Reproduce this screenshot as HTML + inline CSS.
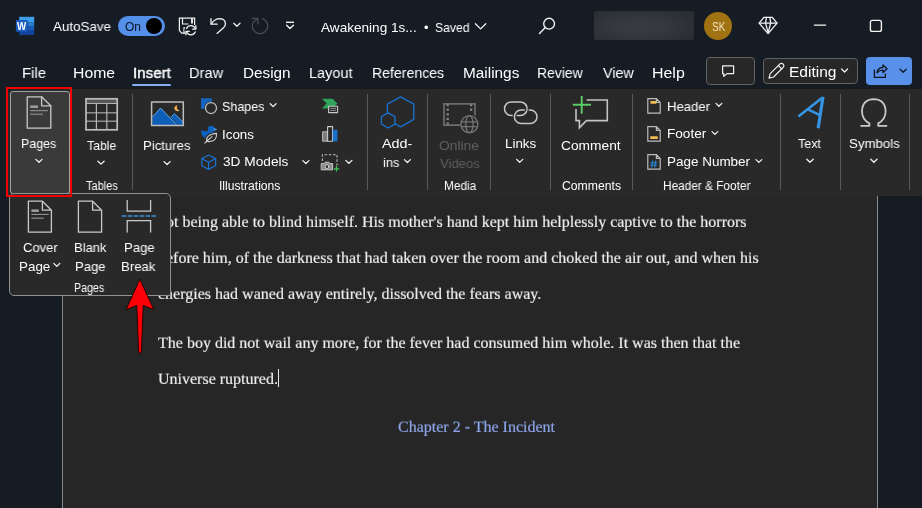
<!DOCTYPE html>
<html lang="en">
<head>
<meta charset="utf-8">
<title>Word - Insert Page Break</title>
<style>
html,body{margin:0;padding:0}
body{width:922px;height:508px;overflow:hidden;background:#161c24;position:relative;font-family:'Liberation Sans',sans-serif}
.abs{position:absolute}
.t{position:absolute;will-change:transform;white-space:pre;line-height:1;transform-origin:0 50%;font-family:'Liberation Sans',sans-serif}
.d{position:absolute;will-change:transform;transform-origin:0 13px;transform:scaleY(0.95);-webkit-text-stroke-width:0.2px;white-space:pre;line-height:1;font-family:'Liberation Serif',serif;font-size:16px;color:#ececec}
#ribbon{left:7px;top:89px;width:915px;height:107px;background:#292929;border-radius:6px 0 0 0}
#page{left:62px;top:196px;width:814px;height:312px;background:#262626;border-left:1px solid #8a8a8a;border-right:1px solid #8c8c8c}
.sep{position:absolute;top:94px;width:1px;height:96px;background:#5a5a5a}
#pagesbtn{left:10px;top:91px;width:58px;height:101px;background:#3a3a3a;border:1px solid #a2a2a2;border-radius:3px}
#redbox{left:6px;top:87px;width:62px;height:106px;border:2.5px solid #f00000}
#drop{left:9px;top:193px;width:162px;height:103px;background:#292929;border:1px solid #929292;border-radius:5px 5px 2px 5px;box-sizing:border-box}
#blur{left:594px;top:11px;width:100px;height:29px;background:radial-gradient(ellipse 62% 70% at 45% 55%,#393c41 0%,#34383d 45%,#2a2e33 100%);border-radius:2px}
#avatar{left:704px;top:12px;width:28px;height:28px;border-radius:50%;background:#a07212}
.btn{position:absolute;box-sizing:border-box;border:1px solid #626262;border-radius:4px;background:#272727}
#share{left:866px;top:57px;width:46px;height:27.8px;background:#5991ea;border-radius:4px}
#insul{left:132.4px;top:83.8px;width:38.4px;height:2.2px;background:#86aef0;border-radius:1px}
#toggle{left:117.7px;top:16.1px;width:47.5px;height:19.8px;border-radius:9.9px;background:#5490ea}
#knob{left:146.1px;top:17.9px;width:16px;height:16px;border-radius:50%;background:#000}
#caret{left:278px;top:369px;width:1px;height:18px;background:#e8e8e8}
svg{position:absolute;left:0;top:0;overflow:visible}
</style>
</head>
<body>
<div class="abs" id="ribbon"></div>
<div class="abs" id="page"></div>
<span class="d" style="left:158px;top:214px">not being able to blind himself. His mother's hand kept him helplessly captive to the horrors</span>
<span class="d" style="left:158px;top:250px">before him, of the darkness that had taken over the room and choked the air out, and when his</span>
<span class="d" style="left:158px;top:286px">energies had waned away entirely, dissolved the fears away.</span>
<span class="d" style="left:158px;top:335px">The boy did not wail any more, for the fever had consumed him whole. It was then that the</span>
<span class="d" style="left:158px;top:371px">Universe ruptured.</span>
<span class="d" style="left:398px;top:419px;color:#8ea6ea">Chapter 2 - The Incident</span>

<div class="abs" id="caret"></div>
<div class="abs" id="toggle"></div><div class="abs" id="knob"></div>
<div class="abs" id="blur"></div>
<div class="abs" id="avatar"></div>
<div class="btn" style="left:706px;top:57px;width:48.5px;height:27.5px"></div>
<div class="btn" style="left:763px;top:57.5px;width:95px;height:26.5px"></div>
<div class="abs" id="share"></div>
<div class="abs" id="insul"></div>
<div class="sep" style="left:132px"></div>
<div class="sep" style="left:367px"></div>
<div class="sep" style="left:427px"></div>
<div class="sep" style="left:490px"></div>
<div class="sep" style="left:550px"></div>
<div class="sep" style="left:632px"></div>
<div class="sep" style="left:780px"></div>
<div class="sep" style="left:840px"></div>
<div class="sep" style="left:909px"></div>
<div class="abs" id="pagesbtn"></div>
<div class="abs" id="drop"></div>
<div class="abs" id="redbox"></div>
<span class="t" style="left:53.30px;top:20.00px;font-size:13.5px;color:#ffffff;font-weight:400;transform:scaleX(0.9908);">AutoSave</span>
<span class="t" style="left:124.50px;top:21.00px;font-size:12px;color:#0b1220;font-weight:400;transform:scaleX(0.9782);">On</span>
<span class="t" style="left:321.20px;top:21.00px;font-size:13.5px;color:#ffffff;font-weight:400;transform:scaleX(1.0063);">Awakening 1s...</span>
<span class="t" style="left:423.90px;top:22.00px;font-size:12px;color:#ffffff;font-weight:400;transform:scaleX(1.0750);">•</span>
<span class="t" style="left:434.50px;top:21.00px;font-size:13.5px;color:#ffffff;font-weight:400;transform:scaleX(0.9028);">Saved</span>
<span class="t" style="left:711.70px;top:21.00px;font-size:12px;color:#f2e2bf;font-weight:400;transform:scaleX(0.8310);">SK</span>
<span class="t" style="left:21.53px;top:65.00px;font-size:15.3px;color:#ffffff;font-weight:400;transform:scaleX(0.9723);">File</span>
<span class="t" style="left:73.47px;top:65.00px;font-size:15.3px;color:#ffffff;font-weight:400;transform:scaleX(1.0306);">Home</span>
<span class="t" style="left:132.71px;top:65.00px;font-size:15.3px;color:#ffffff;font-weight:400;transform:scaleX(0.9867);-webkit-text-stroke:0.45px #fff">Insert</span>
<span class="t" style="left:189.05px;top:65.00px;font-size:15.3px;color:#ffffff;font-weight:400;transform:scaleX(0.9538);">Draw</span>
<span class="t" style="left:242.51px;top:65.00px;font-size:15.3px;color:#ffffff;font-weight:400;transform:scaleX(0.9911);">Design</span>
<span class="t" style="left:309.05px;top:65.00px;font-size:15.3px;color:#ffffff;font-weight:400;transform:scaleX(0.9457);">Layout</span>
<span class="t" style="left:372.08px;top:65.00px;font-size:15.3px;color:#ffffff;font-weight:400;transform:scaleX(0.9217);">References</span>
<span class="t" style="left:462.50px;top:65.00px;font-size:15.3px;color:#ffffff;font-weight:400;transform:scaleX(1.0043);">Mailings</span>
<span class="t" style="left:537.09px;top:65.00px;font-size:15.3px;color:#ffffff;font-weight:400;transform:scaleX(0.9120);">Review</span>
<span class="t" style="left:602.50px;top:65.00px;font-size:15.3px;color:#ffffff;font-weight:400;transform:scaleX(0.9370);">View</span>
<span class="t" style="left:651.96px;top:65.00px;font-size:15.3px;color:#ffffff;font-weight:400;transform:scaleX(1.0416);">Help</span>
<span class="t" style="left:789.00px;top:64.00px;font-size:15.5px;color:#ffffff;font-weight:400;transform:scaleX(0.9984);">Editing</span>
<span class="t" style="left:21.07px;top:137.00px;font-size:13.4px;color:#ffffff;font-weight:400;transform:scaleX(0.9283);">Pages</span>
<span class="t" style="left:86.80px;top:139.00px;font-size:13.4px;color:#ffffff;font-weight:400;transform:scaleX(0.9156);">Table</span>
<span class="t" style="left:85.60px;top:180.00px;font-size:12px;color:#ffffff;font-weight:400;transform:scaleX(0.9168);">Tables</span>
<span class="t" style="left:142.92px;top:139.00px;font-size:13.4px;color:#ffffff;font-weight:400;transform:scaleX(0.9816);">Pictures</span>
<span class="t" style="left:222.30px;top:100.00px;font-size:13.4px;color:#ffffff;font-weight:400;transform:scaleX(0.9339);">Shapes</span>
<span class="t" style="left:221.91px;top:128.00px;font-size:13.4px;color:#ffffff;font-weight:400;transform:scaleX(0.9869);">Icons</span>
<span class="t" style="left:222.90px;top:155.00px;font-size:13.4px;color:#ffffff;font-weight:400;transform:scaleX(1.0216);">3D Models</span>
<span class="t" style="left:219.39px;top:180.00px;font-size:12px;color:#ffffff;font-weight:400;transform:scaleX(1.0119);">Illustrations</span>
<span class="t" style="left:382.20px;top:137.00px;font-size:13.4px;color:#ffffff;font-weight:400;transform:scaleX(1.0745);">Add-</span>
<span class="t" style="left:382.50px;top:156.00px;font-size:13.4px;color:#ffffff;font-weight:400;transform:scaleX(0.9528);">ins</span>
<span class="t" style="left:439.40px;top:139.00px;font-size:13.4px;color:#5e5e5e;font-weight:400;transform:scaleX(1.0324);">Online</span>
<span class="t" style="left:439.70px;top:157.00px;font-size:13.4px;color:#5e5e5e;font-weight:400;transform:scaleX(0.9779);">Videos</span>
<span class="t" style="left:443.60px;top:180.00px;font-size:12px;color:#ffffff;font-weight:400;transform:scaleX(0.9846);">Media</span>
<span class="t" style="left:504.61px;top:137.00px;font-size:13.4px;color:#ffffff;font-weight:400;transform:scaleX(0.9946);">Links</span>
<span class="t" style="left:561.40px;top:139.00px;font-size:13.4px;color:#ffffff;font-weight:400;transform:scaleX(1.0271);">Comment</span>
<span class="t" style="left:562.00px;top:180.00px;font-size:12px;color:#ffffff;font-weight:400;transform:scaleX(1.0170);">Comments</span>
<span class="t" style="left:666.82px;top:100.00px;font-size:13.4px;color:#ffffff;font-weight:400;transform:scaleX(0.9802);">Header</span>
<span class="t" style="left:666.79px;top:127.00px;font-size:13.4px;color:#ffffff;font-weight:400;transform:scaleX(1.0146);">Footer</span>
<span class="t" style="left:666.79px;top:155.00px;font-size:13.4px;color:#ffffff;font-weight:400;transform:scaleX(1.0054);">Page Number</span>
<span class="t" style="left:663.40px;top:180.00px;font-size:12px;color:#ffffff;font-weight:400;transform:scaleX(0.9852);">Header &amp; Footer</span>
<span class="t" style="left:798.40px;top:137.00px;font-size:13.4px;color:#ffffff;font-weight:400;transform:scaleX(0.9341);">Text</span>
<span class="t" style="left:849.20px;top:137.00px;font-size:13.4px;color:#ffffff;font-weight:400;transform:scaleX(0.9874);">Symbols</span>
<span class="t" style="left:23.20px;top:241.00px;font-size:13.4px;color:#ffffff;font-weight:400;transform:scaleX(0.9735);">Cover</span>
<span class="t" style="left:18.61px;top:260.00px;font-size:13.4px;color:#ffffff;font-weight:400;transform:scaleX(0.9857);">Page</span>
<span class="t" style="left:73.93px;top:241.00px;font-size:13.4px;color:#ffffff;font-weight:400;transform:scaleX(0.9695);">Blank</span>
<span class="t" style="left:74.52px;top:260.00px;font-size:13.4px;color:#ffffff;font-weight:400;transform:scaleX(0.9757);">Page</span>
<span class="t" style="left:123.82px;top:241.00px;font-size:13.4px;color:#ffffff;font-weight:400;transform:scaleX(0.9790);">Page</span>
<span class="t" style="left:121.42px;top:260.00px;font-size:13.4px;color:#ffffff;font-weight:400;transform:scaleX(0.9829);">Break</span>
<span class="t" style="left:74.40px;top:282.00px;font-size:12px;color:#ffffff;font-weight:400;transform:scaleX(0.8876);">Pages</span>
<svg width="922" height="508" viewBox="0 0 922 508" fill="none" stroke-linecap="round" stroke-linejoin="round">
<!-- Word logo -->
<g stroke="none">
<rect x="19.2" y="16.8" width="15" height="5.8" fill="#3d9fec"/>
<rect x="19.2" y="22.4" width="15" height="4" fill="#2b7bd2"/>
<rect x="19.2" y="26.2" width="15" height="4.4" fill="#195bbf"/>
<rect x="19.2" y="30.4" width="15" height="4.5" fill="#1146a0"/>
<rect x="16.6" y="20.6" width="11.8" height="11.8" rx="1.2" fill="#0b2f66" opacity="0.45"/>
<rect x="15.9" y="20.1" width="11.7" height="11.7" rx="1.2" fill="#1a5bbf"/>
<text x="17" y="29.8" font-family="'Liberation Sans',sans-serif" font-size="10.6" font-weight="700" fill="#fff" textLength="9.2" lengthAdjust="spacingAndGlyphs">W</text>
</g>
<!-- Save (floppy + sync) -->
<g stroke="#f2f2f2" stroke-width="1.2" stroke-linejoin="miter">
<path d="M186 33.1H181.7L179.4 30.6V18.2H194.6V25"/>
<path d="M182.5 18.4V24H188"/>
<path d="M192 18.6V23.4" stroke-width="1.9" stroke-linecap="butt"/>
<path d="M184 33V27.9H185.6"/>
</g>
<circle cx="190.9" cy="30.2" r="6.3" fill="#161c24" stroke="none"/>
<g stroke="#f2f2f2" stroke-width="1.25">
<path d="M186.6 28.4A4.7 4.7 0 0 1 195.3 28.6M195.2 31.9A4.7 4.7 0 0 1 186.5 31.8"/>
<path d="M195.9 25.6V29H192.6M185.9 34.8V31.4H189.2"/>
</g>
<!-- Undo -->
<g stroke="#f2f2f2" stroke-width="1.3">
<path d="M211 18.6V24.2H217.2"/>
<path d="M211.3 24Q214.5 18.6 220 18.6Q225.4 19 225.4 24Q225.4 26 223.5 27.8L217 33.4"/>
<path d="M233.8 23.2L236.9 26.2L240 23.2"/>
</g>
<!-- Redo (disabled) -->
<g stroke="#4a4d51" stroke-width="1.25">
<path d="M262.4 18.6A7.7 7.7 0 1 1 253.3 22.2L257.7 18.5"/>
<path d="M252.2 18.4H257.9V24.1"/>
</g>
<!-- QAT customise -->
<g stroke="#f2f2f2" stroke-width="1.4">
<path d="M286 22.3H294" stroke-linecap="butt"/>
<path d="M286.6 25.3L290 28.4L293.4 25.3"/>
</g>
<!-- Saved chevron -->
<path d="M475.4 23.7L480.6 28.9L485.8 23.7" stroke="#f2f2f2" stroke-width="1.3"/>
<!-- Search -->
<g stroke="#f2f2f2" stroke-width="1.4">
<circle cx="549.1" cy="23.7" r="5.4"/>
<path d="M545.1 27.8L539.5 33.6"/>
</g>
<!-- Diamond -->
<g stroke="#f2f2f2" stroke-width="1.3">
<path d="M763.9 17.3H772.3L777 23.1L768.1 33.6L759.1 23.1Z"/>
<path d="M759.4 23.1H776.8"/>
<path d="M766.3 17.5L765.6 23.1L768.1 32.6M770 17.5L770.7 23.1L768.1 32.6"/>
</g>
<!-- Window controls -->
<path d="M814.4 25.2H825.6" stroke="#f2f2f2" stroke-width="1.3"/>
<rect x="870.4" y="20.4" width="11" height="11" rx="2" stroke="#f2f2f2" stroke-width="1.4"/>
<!-- Comments button icon -->
<path d="M722.6 65.8H733.6V73.6H727L723.8 76.4V73.6H722.6Z" stroke="#f2f2f2" stroke-width="1.2"/>
<!-- Editing pencil -->
<g stroke="#f2f2f2" stroke-width="1.2">
<path d="M769 78.2L770.2 73.6L780 63.8Q781.6 62.6 783.2 64.2Q784.6 65.8 783.4 67.2L773.6 77Z"/>
<path d="M778.4 65.6L781.8 69"/>
<path d="M841.6 69L844.6 72L847.6 69"/>
</g>
<!-- Share -->
<g stroke="#10151c" stroke-width="1.3">
<path d="M874.4 69.4V77.3H885.4V73.6" stroke-linejoin="miter" stroke-linecap="butt"/>
<path d="M877 72.8Q877.4 67.8 883 67.4V64.9L887 68.8L883 72.5V70.1Q879.4 70 877 72.8Z"/>
<path d="M900 69.3L903.1 72.3L906.2 69.3"/>
</g>
<!-- ===== Ribbon icons ===== -->
<!-- Pages -->
<g stroke="#c9c9c9" stroke-width="1.3">
<path d="M27.2 96.8H41.6L50.8 105.8V128.2H27.2Z"/>
<path d="M41.6 96.8V105.8H50.8"/>
</g>
<g stroke="none">
<rect x="30.2" y="105.4" width="7.8" height="2.6" fill="#9a9a9a"/>
<rect x="30.2" y="110" width="17.6" height="1.2" fill="#8c8c8c"/>
<rect x="30.2" y="113.6" width="12.8" height="1.2" fill="#8c8c8c"/>
</g>
<path d="M35.9 159.4L39 162.3L42.1 159.4" stroke="#f2f2f2" stroke-width="1.3"/>
<!-- Table -->
<rect x="85.6" y="98.2" width="32" height="5" fill="#575757" stroke="none"/>
<path d="M86 112.7H117.2M86 121.2H117.2" stroke="#8e8e8e" stroke-width="1.5" stroke-linecap="butt"/>
<path d="M96.4 103.4V130M106.8 103.4V130M86 103.5H117.2" stroke="#b4b4b4" stroke-width="1.2" stroke-linecap="butt"/>
<rect x="86" y="98.8" width="31.2" height="31" stroke="#bdbdbd" stroke-width="1.7" stroke-linejoin="miter"/>
<path d="M97.9 161.2L101 164.1L104.1 161.2" stroke="#f2f2f2" stroke-width="1.3"/>
<!-- Pictures -->
<g stroke="none" fill="#0f5fb8">
<path d="M152.4 125.2V117L160.6 108L176.9 125.2Z"/>
<path d="M170.6 117.4L174.5 113.8L183 122V125.2H178.2Z"/>
</g>
<path d="M152.4 117L160.6 108L176.9 125.2M170.8 117.4L174.5 113.8L183 122" stroke="#5eb0f0" stroke-width="0.9" stroke-linecap="butt"/>
<path d="M177.4 105.2Q175.6 109.2 179.8 110.6Q175.4 112.4 174.2 108.6Q174.2 105.8 177.4 105.2Z" fill="#f0ae50" stroke="none"/>
<rect x="151.6" y="101.9" width="31.7" height="23.6" stroke="#bdbdbd" stroke-width="1.5"/>
<path d="M164 161.6L167.1 164.5L170.2 161.6" stroke="#f2f2f2" stroke-width="1.3"/>
<!-- Shapes -->
<rect x="201" y="98.3" width="11" height="10.6" fill="#1565c0" stroke="none"/>
<circle cx="211" cy="108" r="6.6" fill="#292929" stroke="none"/>
<circle cx="211" cy="108" r="5.5" fill="#292929" stroke="#c2c2c2" stroke-width="1.25"/>
<path d="M270.2 103.8L273.1 106.6L276 103.8" stroke="#f2f2f2" stroke-width="1.3"/>
<!-- Icons (bird + leaf) -->
<g stroke="none">
<path d="M201 129.8Q204 132.2 208.4 130.6L214.2 131.4Q214.6 138.6 207.6 138.8Q201.2 138.4 201 129.8Z" fill="#1062c0"/>
<circle cx="211.1" cy="128.9" r="3.2" fill="#1062c0"/>
<path d="M213.6 127.4L217.3 129.4L213.8 131Z" fill="#3f97e6"/>
</g>
<path d="M206.6 141.2Q205.6 134.4 216.6 133.4Q217 141.8 208.6 141.6Q207.2 141.6 206.6 141.2ZM204.8 143L207 141" fill="#292929" stroke="#292929" stroke-width="3.4"/>
<path d="M206.6 141.2Q205.6 134.4 216.6 133.4Q217 141.8 208.6 141.6Q207.2 141.6 206.6 141.2ZM204.9 143L212 136.6" stroke="#c8c8c8" stroke-width="1.15"/>
<!-- 3D Models -->
<g stroke="#1b70cc" stroke-width="1.25">
<path d="M208.6 155L215.6 158.6V165.8L208.6 169.4L201.8 165.8V158.6Z"/>
<path d="M201.8 158.6L208.6 162.2L215.6 158.6M208.6 162.2V169.4"/>
</g>
<path d="M302.8 160.6L305.9 163.5L309 160.6" stroke="#f2f2f2" stroke-width="1.3"/>
<!-- SmartArt -->
<path d="M322 98.8H332.6L337.4 103.6L332.6 108.4H322L326.6 103.6Z" fill="#2fa45b" stroke="none"/>
<rect x="328.6" y="106.2" width="9" height="6.4" fill="#292929" stroke="#c9c9c9" stroke-width="1.1"/>
<path d="M330.6 108.4H335.8M330.6 110.4H335.8" stroke="#9a9a9a" stroke-width="0.9"/>
<!-- Chart -->
<rect x="323" y="131.8" width="4.4" height="9.4" fill="#7a7a7a" stroke="#bdbdbd" stroke-width="1"/>
<rect x="327.6" y="126.6" width="5" height="14.6" fill="#292929" stroke="#c9c9c9" stroke-width="1.1"/>
<rect x="332.8" y="129.8" width="4.6" height="11.6" fill="#1b6fca" stroke="none"/>
<!-- Screenshot -->
<path d="M322.4 161V154.8H337V165.4" stroke="#bdbdbd" stroke-width="1.1" stroke-dasharray="2.6 1.6" stroke-linecap="butt"/>
<path d="M321.6 163.6H324.2L325.2 162.2H328.8L329.8 163.6H332.6V169.8H321.6Z" fill="#8a8a8a" stroke="#c9c9c9" stroke-width="1"/>
<circle cx="327" cy="166.6" r="1.9" fill="#292929" stroke="#d9d9d9" stroke-width="0.9"/>
<path d="M334.2 168.8H338.8M336.5 166.5V171.1" stroke="#3fc35d" stroke-width="1.3"/>
<path d="M345.8 160.4L348.9 163.3L352 160.4" stroke="#f2f2f2" stroke-width="1.3"/>
<!-- Add-ins -->
<g stroke="#1b6fca" stroke-width="1.35">
<path d="M400.6 96.8L413.8 104.2V119.4L400.6 126.8L387.4 119.4V104.2Z"/>
<path d="M388.2 112.8L394.9 116.6V124.2L388.2 128L381.4 124.2V116.6Z" fill="#292929"/>
</g>
<path d="M404.4 159.6L407.4 162.5L410.4 159.6" stroke="#f2f2f2" stroke-width="1.3"/>
<!-- Online videos (disabled) -->
<path d="M475 115.6V103.9H444V125.1H461" stroke="#6c6c6c" stroke-width="1.7" stroke-linejoin="miter" stroke-linecap="butt"/>
<g fill="#8a8a8a" stroke="none">
<rect x="446.6" y="104.4" width="2.2" height="1.8"/><rect x="446.6" y="108.6" width="2.2" height="2.2"/><rect x="446.6" y="113.3" width="2.2" height="2.2"/><rect x="446.6" y="117.9" width="2.2" height="2.2"/><rect x="446.6" y="122.4" width="2.2" height="2"/>
<rect x="470" y="104.4" width="2.2" height="1.8"/><rect x="470" y="108.6" width="2.2" height="2.2"/>
</g>
<g stroke="#747474" stroke-width="1.3">
<circle cx="469.4" cy="124.2" r="8.5" fill="#292929"/>
<ellipse cx="469.4" cy="124.2" rx="3.7" ry="8.5"/>
<path d="M461.3 121.8H477.5M461.3 126.6H477.5" stroke-linecap="butt"/>
</g>
<!-- Links -->
<rect x="504.5" y="101.9" width="22.6" height="13.6" rx="6.8" stroke="#c6c6c6" stroke-width="1.5"/>
<path d="M515.3 113.4A6.7 6.7 0 0 0 514.9 119.2" stroke="#292929" stroke-width="3.8" stroke-linecap="butt"/>
<rect x="514.4" y="110" width="22.6" height="13.4" rx="6.7" stroke="#c6c6c6" stroke-width="1.5"/>
<path d="M526.6 106.2A6.8 6.8 0 0 1 526.2 112" stroke="#292929" stroke-width="3.8" stroke-linecap="butt"/>
<path d="M525.6 104.6A6.8 6.8 0 0 1 525.2 113.4" stroke="#c6c6c6" stroke-width="1.5" stroke-linecap="butt"/>
<path d="M516.6 159.4L519.7 162.3L522.8 159.4" stroke="#f2f2f2" stroke-width="1.3"/>
<!-- Comment -->
<path d="M586.6 100H607.3V120.6H586.4L579.4 127.8V120.6H576V109" stroke="#c4c4c4" stroke-width="1.6" stroke-linejoin="miter" stroke-linecap="butt"/>
<path d="M572.8 104.7H591M581.7 96V113.8" stroke="#5ccc66" stroke-width="1.9" stroke-linecap="butt"/>
<!-- Header / Footer / Page number -->
<g stroke="#bcbcbc" stroke-width="1.2" stroke-linejoin="miter">
<path d="M647.8 98.6H656.4L660.2 102.4V113.2H647.8ZM656.4 98.6V102.4H660.2"/>
<path d="M647.8 126.6H656.4L660.2 130.4V141.2H647.8ZM656.4 126.6V130.4H660.2"/>
<path d="M647.8 154.6H656.4L660.2 158.4V169.2H647.8ZM656.4 154.6V158.4H660.2"/>
</g>
<rect x="650.4" y="101" width="6" height="2.8" rx="0.6" fill="#f1bb55" stroke="none"/>
<rect x="650.2" y="136.2" width="7.6" height="2.8" rx="0.6" fill="#f1bb55" stroke="none"/>
<path d="M652.8 160.8L651.8 167.2M655.8 160.8L654.8 167.2M650.8 162.8H657M650.4 165.2H656.6" stroke="#2b8ae0" stroke-width="1"/>
<g stroke="#f2f2f2" stroke-width="1.3">
<path d="M716 103.4L718.9 106.2L721.8 103.4"/>
<path d="M712 131.6L714.9 134.4L717.8 131.6"/>
<path d="M756 159.6L758.9 162.4L761.8 159.6"/>
</g>
<!-- Text (A) -->
<g stroke="#3595e4" stroke-width="2.6" stroke-linecap="butt" stroke-linejoin="miter">
<path d="M798.4 116.6L821.6 98.2"/>
<path d="M808.4 109.6L820.4 115.4"/>
<path d="M823 96.8L818.2 128.2" stroke-width="3.1"/>
</g>
<path d="M806.8 159.2L810 162.2L813.2 159.2" stroke="#f2f2f2" stroke-width="1.3"/>
<!-- Symbols (omega) -->
<path d="M860.4 125.8H869.4V123.4Q862 119.2 862 111.4Q862.4 99.4 873.8 99.2Q885.2 99.4 885.6 111.4Q885.6 119.2 878.2 123.4V125.8H887.2" stroke="#c9c9c9" stroke-width="1.8" stroke-linecap="butt"/>
<path d="M870.8 159.2L873.9 162.2L877 159.2" stroke="#f2f2f2" stroke-width="1.3"/>
<!-- ===== Dropdown icons ===== -->
<g stroke="#c9c9c9" stroke-width="1.3">
<path d="M28.4 201.2H42.4L51.4 210.2V232.2H28.4ZM42.4 201.2V210.2H51.4"/>
<path d="M78.4 201.2H92.6L101.6 210.2V232.2H78.4ZM92.6 201.2V210.2H101.6"/>
<path d="M127.2 200.4V211.2H150.6V200.4M127.2 232V220.6H150.6V232" stroke-linejoin="miter"/>
</g>
<g stroke="none">
<rect x="31.4" y="209.4" width="7.4" height="2.6" fill="#9a9a9a"/>
<rect x="31.4" y="213.8" width="17.2" height="1.2" fill="#8c8c8c"/>
<rect x="31.4" y="217.6" width="12.4" height="1.2" fill="#8c8c8c"/>
</g>
<path d="M121.8 216H156.2" stroke="#3b8fd8" stroke-width="1.4" stroke-dasharray="4.6 1.35" stroke-linecap="butt"/>
<path d="M53.8 263.4L56.8 266.4L59.8 263.4" stroke="#f2f2f2" stroke-width="1.3"/>
<!-- Red arrow -->
<path d="M139.9 279.4L153.8 309.6L143.2 305.4L141.4 352Q140 354.4 138.6 352L136.8 305.4L126.4 309.6Z" fill="#fb0007" stroke="#200000" stroke-width="0.9" stroke-linejoin="miter"/>

</svg>
</body>
</html>
